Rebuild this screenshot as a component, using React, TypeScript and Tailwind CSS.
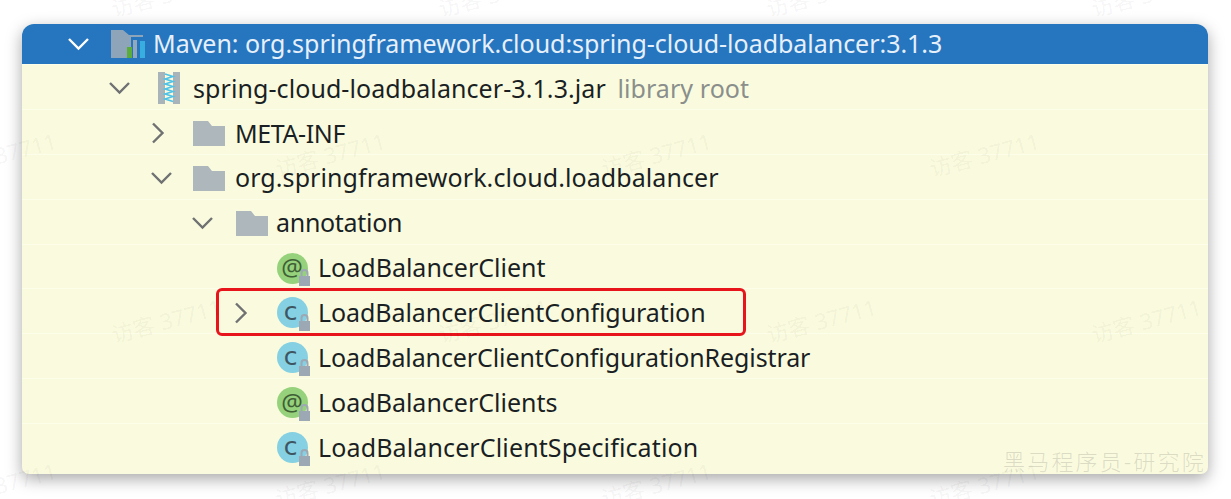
const Chevron = ({ down, light }: { down?: boolean; light?: boolean }) => (
  <svg width="24" height="24" viewBox="0 0 24 24" fill="none" className={light ? "stroke-white" : "stroke-[#6f7173]"}>
    <path d={down ? "M1 7l9.5 9.5L20 7" : "M2 2.5L11.5 12 2 21.5"} strokeWidth="2.4" />
  </svg>
);

const Folder = () => (
  <svg width="32" height="25" viewBox="0 0 32 25" className="fill-[#aeb8bc]">
    <path d="M0 0h15l4 5h13v20H0z" />
  </svg>
);

const Jar = () => (
  <svg width="24" height="34" viewBox="0 0 24 34">
    <path d="M1 1h7v32H1zM16 1h7v32h-7z" fill="#a9b4ba" />
    <path d="M8 3l8 2.5-8 2.5 8 2.5-8 2.5 8 2.5-8 2.5 8 2.5-8 2.5 8 2.5-8 2.5 8 2.5" fill="none" stroke="#4fc3e8" strokeWidth="1.6" />
  </svg>
);

const MavenIcon = () => (
  <svg width="36" height="28" viewBox="0 0 36 28">
    <path d="M0 0h12l6 5h14v2H20v21H0z" fill="#8ea4b8" />
    <path d="M16 17h5v11h-5z" fill="#5aad3a" />
    <path d="M22 10h4v18h-4z" fill="#93a9bb" />
    <path d="M29 11h5v17h-5z" fill="#38aee0" />
  </svg>
);

const Badge = ({ kind }: { kind: "c" | "at" }) => (
  <span className="relative flex h-[32px] w-[32px] items-center justify-center">
    {kind === "c" ? (
      <span className="flex h-[31px] w-[31px] items-center justify-center rounded-full bg-[#85d0e2] pr-[3px] pb-[2px] font-['DejaVu_Sans',sans-serif] text-[25px] leading-none text-[#3f5560]">
        c
      </span>
    ) : (
      <span className="flex h-[31px] w-[31px] items-center justify-center rounded-full bg-[#96d27c] pb-[2px] text-[24px] leading-none text-[#3f5f35]">
        @
      </span>
    )}
    <svg width="13" height="18" viewBox="0 0 13 18" className="absolute right-[-3px] bottom-[-2px]">
      <path d="M3.5 8V5a3 3 0 016 0v3" fill="none" stroke="#9ca8b3" strokeWidth="2" />
      <path d="M1 8h11v10H1z" fill="#9ca8b3" />
    </svg>
  </span>
);

type RowProps = {
  indent: string;
  chevron?: "down" | "right";
  icon: React.ReactNode;
  fit?: string;
  children: React.ReactNode;
};

function Row({ indent, chevron, icon, fit = "", children }: RowProps) {
  return (
    <div className={`flex h-[44.9px] items-center border-t border-[#fdfeea] pt-[3px] ${indent}`}>
      <span className="flex w-[42px] shrink-0 items-center">{chevron && <Chevron down={chevron === "down"} />}</span>
      <span className="flex w-[42px] shrink-0 items-center">{icon}</span>
      <span className={`whitespace-nowrap ${fit}`}>{children}</span>
    </div>
  );
}

const marks = [
  "left-[-55px] top-[138px]", "left-[274px] top-[138px]", "left-[600px] top-[138px]", "left-[928px] top-[138px]",
  "left-[110px] top-[304px]", "left-[437px] top-[304px]", "left-[765px] top-[304px]", "left-[1090px] top-[304px]",
  "left-[-55px] top-[468px]", "left-[274px] top-[468px]", "left-[600px] top-[468px]", "left-[928px] top-[468px]",
  "left-[110px] top-[-22px]", "left-[437px] top-[-22px]", "left-[765px] top-[-22px]", "left-[1090px] top-[-22px]",
];

export default function App() {
  return (
    <div className="relative h-[499px] w-[1231px] overflow-hidden bg-white pt-[24px] pl-[22px] font-['Noto_Sans','Noto_Sans_CJK_SC',sans-serif] text-[25px] text-[#1a1f24]">
      <div className="h-[450px] w-[1186px] overflow-hidden rounded-t-[12px] rounded-b-[7px] bg-[#fafbde] shadow-[0_5px_16px_rgba(0,0,0,0.35)]">
        <div className="flex h-[40px] items-center bg-[#2675bf] pl-[46px] text-[#e6f0fa]">
          <span className="flex w-[43px] shrink-0 items-center"><Chevron down light /></span>
          <span className="flex w-[42px] shrink-0 items-center"><MavenIcon /></span>
          <span className="tracking-[-0.03px]">Maven: org.springframework.cloud:spring-cloud-loadbalancer:3.1.3</span>
        </div>
        <Row indent="pl-[87px]" chevron="down" fit="tracking-[0.08px]" icon={<span className="flex pl-[6px]"><Jar /></span>}>
          spring-cloud-loadbalancer-3.1.3.jar <span className="ml-[5px] text-[#8a8f8c]">library root</span>
        </Row>
        <Row indent="pl-[129px]" chevron="right" fit="tracking-[-0.4px]" icon={<Folder />}>META-INF</Row>
        <Row indent="pl-[129px]" chevron="down" fit="tracking-[0.08px]" icon={<Folder />}>org.springframework.cloud.loadbalancer</Row>
        <Row indent="pl-[170px]" chevron="down" fit="tracking-[-0.3px]" icon={<span className="flex pl-[2px]"><Folder /></span>}>annotation</Row>
        <Row indent="pl-[212px]" icon={<Badge kind="at" />}>LoadBalancerClient</Row>
        <Row indent="pl-[212px]" chevron="right" fit="tracking-[-0.07px]" icon={<Badge kind="c" />}>LoadBalancerClientConfiguration</Row>
        <Row indent="pl-[212px]" fit="tracking-[-0.1px]" icon={<Badge kind="c" />}>LoadBalancerClientConfigurationRegistrar</Row>
        <Row indent="pl-[212px]" icon={<Badge kind="at" />}>LoadBalancerClients</Row>
        <Row indent="pl-[212px]" fit="tracking-[0.13px]" icon={<Badge kind="c" />}>LoadBalancerClientSpecification</Row>
      </div>

      {/* red highlight drawn over the tree */}
      <div className="absolute top-[288px] left-[216px] h-[48px] w-[530px] rounded-[6px] border-[3px] border-[#e8141c]" />

      {marks.map((pos) => (
        <span key={pos} className={`absolute ${pos} -rotate-[15deg] whitespace-nowrap text-[22px] text-[rgba(0,0,0,0.05)]`}>
          访客 37711
        </span>
      ))}

      <span className="absolute top-[445px] left-[1003px] text-[22px] font-light tracking-[2.2px] whitespace-nowrap text-[rgba(90,90,90,0.2)]">
        黑马程序员-研究院
      </span>
    </div>
  );
}
